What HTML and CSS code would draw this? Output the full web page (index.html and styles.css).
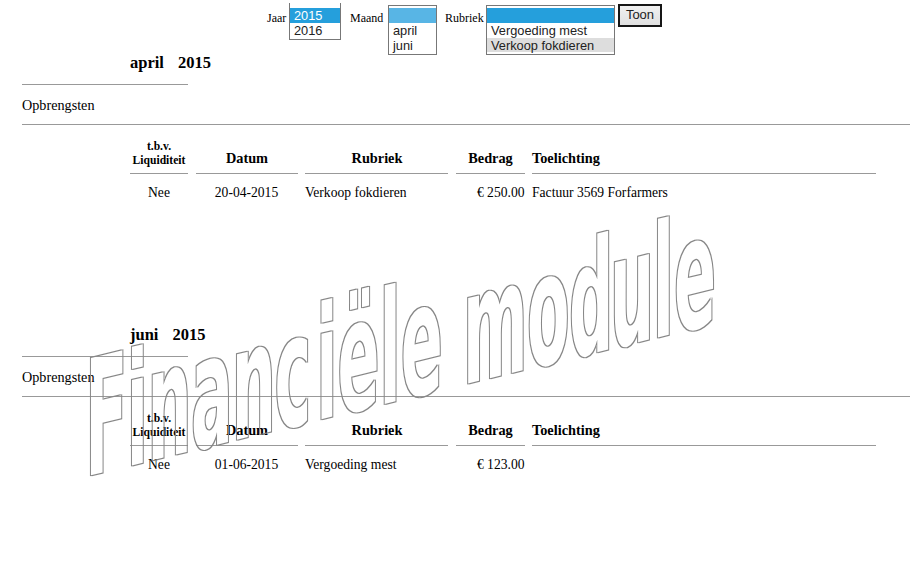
FILE: index.html
```html
<!DOCTYPE html>
<html lang="nl">
<head>
<meta charset="utf-8">
<title>Financiële module</title>
<link rel="stylesheet" href="styles.css">
</head>
<body>
<form class="filters">
  <span class="label">Jaar</span>
  <div class="list list-year"><div class="option selected">2015</div><div class="option">2016</div></div>
  <span class="label label-month">Maand</span>
  <div class="list list-month"><div class="option light"></div><div class="option">april</div><div class="option">juni</div></div>
  <span class="label label-category">Rubriek</span>
  <div class="list list-category"><div class="option selected"></div><div class="option">Vergoeding mest</div><div class="option hover">Verkoop fokdieren</div></div>
  <button class="show" type="button">Toon</button>
</form>
<main>
  <section class="month">
    <h2><span>april</span><span>2015</span></h2>
    <div class="kind">Opbrengsten</div>
    <div class="grid">
      <div class="th small">t.b.v.<br>Liquiditeit</div><div class="th">Datum</div><div class="th">Rubriek</div><div class="th">Bedrag</div><div class="th left">Toelichting</div>
      <div class="td center">Nee</div><div class="td center">20-04-2015</div><div class="td">Verkoop fokdieren</div><div class="td right">€ 250.00</div><div class="td">Factuur 3569 Forfarmers</div>
    </div>
  </section>
  <section class="month">
    <h2><span>juni</span><span>2015</span></h2>
    <div class="kind">Opbrengsten</div>
    <div class="grid">
      <div class="th small">t.b.v.<br>Liquiditeit</div><div class="th">Datum</div><div class="th">Rubriek</div><div class="th">Bedrag</div><div class="th left">Toelichting</div>
      <div class="td center">Nee</div><div class="td center">01-06-2015</div><div class="td">Vergoeding mest</div><div class="td right">€ 123.00</div><div class="td"></div>
    </div>
  </section>
</main>
<svg class="watermark" width="920" height="562" viewBox="0 0 920 562">
  <defs>
    <filter id="outline" filterUnits="userSpaceOnUse" x="0" y="0" width="920" height="562" color-interpolation-filters="sRGB">
      <feMorphology in="SourceAlpha" operator="dilate" radius="1" result="grown"/>
      <feFlood flood-color="#868686"/>
      <feComposite in2="grown" operator="in"/>
      <feComposite in2="SourceAlpha" operator="out"/>
    </filter>
  </defs>
  <g filter="url(#outline)">
    <text transform="matrix(1 -0.2434 0 2.6 0 497.5)" x="85.2" y="0">F</text>
    <text transform="matrix(1 -0.2434 0 2.52 0 497.5)" x="126.7 147.5 191 231.8 274.6 316.2 337.6 379.4 400.7 463 527.1 569.1 610 652.7 674.1" y="0">inanciëlemodule</text>
  </g>
</svg>
</body>
</html>
```
FILE: styles.css
```css
* { box-sizing: border-box; }
body {
  margin: 0;
  width: 920px;
  height: 562px;
  overflow: hidden;
  position: relative;
  background: #fff;
  color: #000;
  font-family: "Liberation Serif", serif;
}
.filters {
  display: flex;
  align-items: flex-start;
  height: 48px;
  padding: 3px 0 0 267px;
}
.label { width: 22px; padding-top: 8px; font-size: 12px; line-height: 14px; }
.label-month { width: 38px; margin-left: 9px; }
.label-category { width: 41px; margin-left: 8px; }
.list {
  flex: none;
  height: 50px;
  margin-top: 2px;
  padding: 2px 0 0;
  border: 1px solid #777;
  background: #fff;
  font: 12.8px/15px "Liberation Sans", sans-serif;
  color: #222;
}
.list-year { width: 52px; height: 37px; margin-top: 0; padding-top: 5px; border-top: 0; }
.list-month { width: 49px; }
.list-category { width: 129px; }
.option { height: 14.8px; padding-left: 4px; white-space: nowrap; }
.selected { background: #259fdc; color: #fff; }
.light { background: #58b5e5; }
.hover { background: #ddd; }
.show {
  width: 44px;
  height: 23px;
  margin: 1px 0 0 3px;
  padding: 0 0 2px;
  border: 2px solid #161616;
  background: linear-gradient(#f0f0f0, #e0e0e0);
  font: 13px/17px "Liberation Sans", sans-serif;
  color: #222;
}
.month { padding-left: 22px; }
.month + .month { margin-top: 116px; }
h2 {
  display: flex;
  gap: 14px;
  width: 166px;
  height: 37px;
  margin: 0;
  padding: 5px 0 0 108px;
  border-bottom: 1px solid #999;
  font-size: 16.5px;
  line-height: 19px;
  white-space: nowrap;
}
.kind {
  width: 888px;
  height: 40px;
  padding-top: 12px;
  border-bottom: 1px solid #999;
  font-size: 14.2px;
  line-height: 17px;
}
.grid {
  display: grid;
  grid-template-columns: 58px 102px 143px 69px 344px;
  column-gap: 7.5px;
  padding-left: 108px;
}
.th {
  display: flex;
  align-items: flex-end;
  justify-content: center;
  height: 49px;
  padding: 0 0 6px 1px;
  border-bottom: 1px solid #999;
  font-size: 14.3px;
  font-weight: bold;
  line-height: 17px;
  white-space: nowrap;
}
.th.left { justify-content: flex-start; padding-left: 0; }
.th.small { padding: 0 0 5px; font-size: 11.6px; line-height: 14px; text-align: center; }
.td { height: 30px; padding-top: 11px; font-size: 13.6px; line-height: 16px; white-space: nowrap; }
.center { text-align: center; }
.right { text-align: right; }
.watermark { position: absolute; left: 0; top: 0; pointer-events: none; }
.watermark text {
  font-family: "DejaVu Sans", sans-serif;
  font-weight: bold;
  font-size: 62px;
}
```
